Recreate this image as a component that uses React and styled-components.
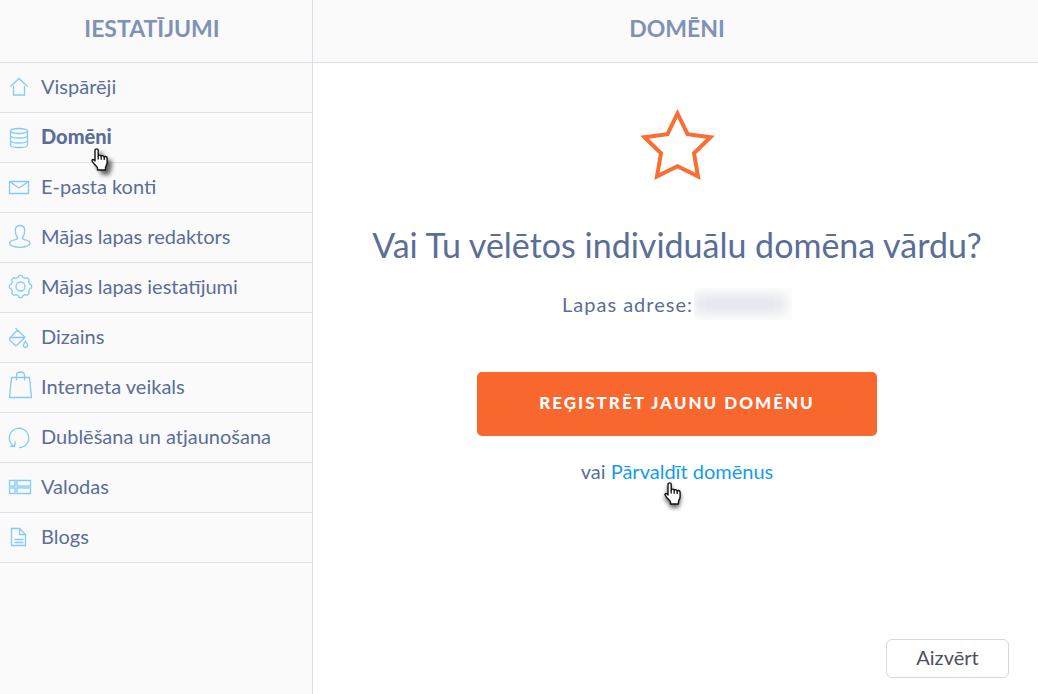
import React from "react";
import styled, { createGlobalStyle, css } from "styled-components";

const GlobalStyle = createGlobalStyle`
  *, *::before, *::after { box-sizing: border-box; }
  body { margin: 0; background: #fff; }
  body, button { font-family: Lato, "Open Sans", sans-serif; }
`;

const line = "#d9e0ea";

const Layout = styled.div`
  display: grid;
  grid-template-columns: 313px 1fr;
  min-height: 100vh;
  color: #5a6e97;
`;

const Sidebar = styled.aside`
  background: #fafafa;
  border-right: 1px solid ${line};
`;

const Header = styled.header`
  display: flex;
  justify-content: center;
  height: 63px;
  padding: ${(p) => p.$padding};
  background: #fafafa;
  border-bottom: 1px solid ${line};
`;

const Title = styled.h2`
  margin: 0;
  font-size: 23px;
  line-height: 56px;
  font-weight: 700;
  color: #7f92b5;
`;

const Menu = styled.ul`
  margin: 0;
  padding: 0;
  list-style: none;
`;

const MenuItem = styled.li`
  border-bottom: 1px solid ${line};
`;

const MenuLink = styled.a`
  display: flex;
  align-items: center;
  gap: 8px;
  height: 49px;
  padding-left: 8px;
  color: inherit;
  font-size: 20px;
  line-height: 24px;
  text-decoration: none;
  ${(p) => p.$active && css`font-weight: 900;`}
`;

const MenuIcon = styled.svg`
  flex: none;
  overflow: visible;
  fill: none;
  stroke: #84cbf8;
  stroke-width: 1.3;
`;

const Anchor = styled.span`
  position: relative;
  padding-bottom: 3px;
`;

const Pointer = styled.svg`
  position: absolute;
  top: ${(p) => p.$top};
  left: ${(p) => p.$left};
  z-index: 1;
  pointer-events: none;
  overflow: visible;
  filter: drop-shadow(${(p) => p.$shadow} rgba(0, 0, 0, 0.6));
`;

const Main = styled.main`
  display: flex;
  flex-direction: column;
`;

const Content = styled.section`
  flex: 1;
  display: flex;
  flex-direction: column;
  align-items: center;
  padding: 46px 29px 16px 32px;
`;

const Heading = styled.h1`
  margin: 41px 0 0;
  font-size: 34px;
  line-height: 44px;
  font-weight: 400;
  text-align: center;
`;

const Address = styled.p`
  display: flex;
  align-items: center;
  gap: 1px;
  margin: 20px 0 0;
  font-size: 20px;
  line-height: 34px;
  letter-spacing: 1px;
`;

const HiddenAddress = styled.span`
  width: 98px;
  height: 32px;
  overflow: hidden;
  display: flex;
  align-items: center;

  &::before {
    content: "";
    width: 92px;
    height: 16px;
    background: #d9dde7;
    filter: blur(8px);
  }
`;

const PrimaryButton = styled.button`
  width: 400px;
  max-width: 100%;
  height: 64px;
  margin-top: 51px;
  padding: 0 0 3px;
  border: 0;
  border-radius: 5px;
  background: #f8672e;
  color: #fff;
  font-size: 17px;
  font-weight: 900;
  letter-spacing: 2px;
`;

const Alternative = styled.p`
  margin: 23px 0 0;
  font-size: 20px;
  line-height: 24px;
`;

const ManageLink = styled.a`
  position: relative;
  color: #149bf3;
  text-decoration: none;
`;

const CloseButton = styled.button`
  align-self: flex-end;
  width: 123px;
  height: 39px;
  margin-top: auto;
  padding: 0 0 4px;
  border: 1px solid #d3d9dc;
  border-radius: 6px;
  background: #fff;
  color: #4c505f;
  font-size: 20px;
`;

const gearPath = (() => {
  const points = [];
  const steps = 96;
  for (let i = 0; i < steps; i += 1) {
    const a = (i / steps) * Math.PI * 2;
    const wave = Math.max(-1, Math.min(1, Math.cos(a * 8) * 1.8));
    const r = 10.2 + wave * 0.9;
    points.push(`${(12.5 + r * Math.cos(a)).toFixed(2)} ${(12.5 + r * Math.sin(a)).toFixed(2)}`);
  }
  return `M${points.join("L")}Z`;
})();

const icons = {
  home: <path d="M2.500 12.500L11 4.500l8.500 8M5.500 12v9h11v-9" />,
  database: (
    <>
      <ellipse cx="11" cy="7" rx="8.500" ry="2.500" />
      <path d="M2.500 7v14c0 1.400 3.800 2.500 8.500 2.500s8.500-1.100 8.500-2.500V7M2.500 11.500c0 1.400 3.800 2.500 8.500 2.500s8.500-1.100 8.500-2.500M2.500 16.500c0 1.400 3.800 2.500 8.500 2.500s8.500-1.100 8.500-2.500" />
    </>
  ),
  mail: <path d="M1.500 7.500h19v12h-19zM1.500 7.500l9.500 6.500 9.500-6.500" />,
  user: (
    <path d="M9.500 13.200C8.200 11.800 7.300 9 7.300 6.400 7.300 3.200 9.200 1.500 12 1.500s4.700 1.700 4.700 4.900c0 2.600-.9 5.400-2.200 6.800-.4 1.600.5 2 2 2.400 3.500.7 5.500 2 5.500 3.700 0 2.300-4.300 4-10 4s-10.500-1.700-10.500-4c0-1.700 2.500-3 6-3.700 1.500-.4 2.400-.8 2-2.400z" />
  ),
  gear: (
    <>
      <path d={gearPath} />
      <circle cx="12.500" cy="12.500" r="4.500" />
    </>
  ),
  paint: (
    <path d="M7.500 4.200L17 13.200 9.300 20.800c-.8.800-1.900.8-2.700 0l-4.500-4.300c-.8-.8-.8-1.900 0-2.700L9.500 6M1.800 13.500H17M17.500 17.300c1 1.500 2 2.700 2 4a2 2 0 0 1-4 0c0-1.300 1-2.500 2-4z" />
  ),
  bag: <path d="M3.500 3.500h18l2 20h-22zM8.500 6.500v-5c0-2 1.500-3.500 4-3.500s4 1.500 4 3.500v5" />,
  restore: (
    <path d="M11 23.700A9.700 9.700 0 1 0 2.900 19.300c.9 1.300 2 2.300 3.500 3.100M7.300 17.500l-.7 5-4.600-.3" />
  ),
  flag: (
    <>
      <path d="M1.500 6.500h21v13h-21z" />
      <path d="M8 6.500v13M1.500 13h21" stroke="#c4e5fb" strokeWidth="3" />
      <path
        d="M7 6.500V12H1.500M9 6.500V12h13.500M7 19.500V14H1.500M9 19.500V14h13.500"
        strokeWidth="1"
      />
    </>
  ),
  page: <path d="M3.500 4.500h8l6 6v11h-14zM11.500 4.500v6h6M6.500 15.500h9M6.500 18.500h9" />,
};

const items = [
  { label: "Vispārēji", icon: "home" },
  { label: "Domēni", icon: "database", active: true },
  { label: "E-pasta konti", icon: "mail" },
  { label: "Mājas lapas redaktors", icon: "user" },
  { label: "Mājas lapas iestatījumi", icon: "gear" },
  { label: "Dizains", icon: "paint" },
  { label: "Interneta veikals", icon: "bag" },
  { label: "Dublēšana un atjaunošana", icon: "restore" },
  { label: "Valodas", icon: "flag" },
  { label: "Blogs", icon: "page" },
];

function HandPointer(props) {
  return (
    <Pointer width="18" height="24" viewBox="0 0 18 24" aria-hidden="true" {...props}>
      <path
        d="M4 2.500C4 .3 7.200.3 7.200 2.500V8c0-1.300 3-1.300 3 .5 0-1.300 3-1.100 3 .7 0-1.200 2.900-.9 2.900 1.100v4.500c0 2.500-1.600 3.500-1.600 5v2.200H6.500v-2c0-1.200-3.700-3.600-5.300-6.700-.9-1.700.8-2.700 2.800-.4z"
        fill="#fff"
        stroke="#111"
        strokeWidth="1.400"
        strokeLinejoin="round"
      />
      <path d="M7.200 8v3.500M10.200 8.500v3.300M13.200 9.200v2.900" stroke="#111" strokeWidth="1.300" />
    </Pointer>
  );
}

export default function App() {
  return (
    <>
      <GlobalStyle />
      <Layout>
        <Sidebar>
          <Header $padding="0 8px 0 0">
            <Title>IESTATĪJUMI</Title>
          </Header>
          <nav>
            <Menu>
              {items.map(({ label, icon, active }) => (
                <MenuItem key={label}>
                  <MenuLink href="#" $active={active} aria-current={active ? "page" : undefined}>
                    <MenuIcon width="25" height="27" viewBox="0 0 25 27" aria-hidden="true">
                      {icons[icon]}
                    </MenuIcon>
                    <Anchor>
                      {label}
                      {active && <HandPointer $top="24px" $left="50px" $shadow="4px 4px 2px" />}
                    </Anchor>
                  </MenuLink>
                </MenuItem>
              ))}
            </Menu>
          </nav>
        </Sidebar>
        <Main>
          <Header $padding="0 29px 0 32px">
            <Title>DOMĒNI</Title>
          </Header>
          <Content>
            <svg width="76" height="73" viewBox="0 0 76 73" aria-hidden="true">
              <path
                d="M38.500 4.500L48.500 25.200l23 3.100-16.500 15.900 4 23.200L38.500 57.200 18 67.400l4-23.200L5.500 28.300 28.500 25.200z"
                fill="none"
                stroke="#fa6e35"
                strokeWidth="4"
              />
            </svg>
            <Heading>Vai Tu vēlētos individuālu domēna vārdu?</Heading>
            <Address>
              Lapas adrese:
              <HiddenAddress />
            </Address>
            <PrimaryButton type="button">REĢISTRĒT JAUNU DOMĒNU</PrimaryButton>
            <Alternative>
              vai{" "}
              <ManageLink href="#">
                Pārvaldīt domēnus
                <HandPointer $top="23px" $left="53px" $shadow="0 3px 2px" />
              </ManageLink>
            </Alternative>
            <CloseButton type="button">Aizvērt</CloseButton>
          </Content>
        </Main>
      </Layout>
    </>
  );
}
